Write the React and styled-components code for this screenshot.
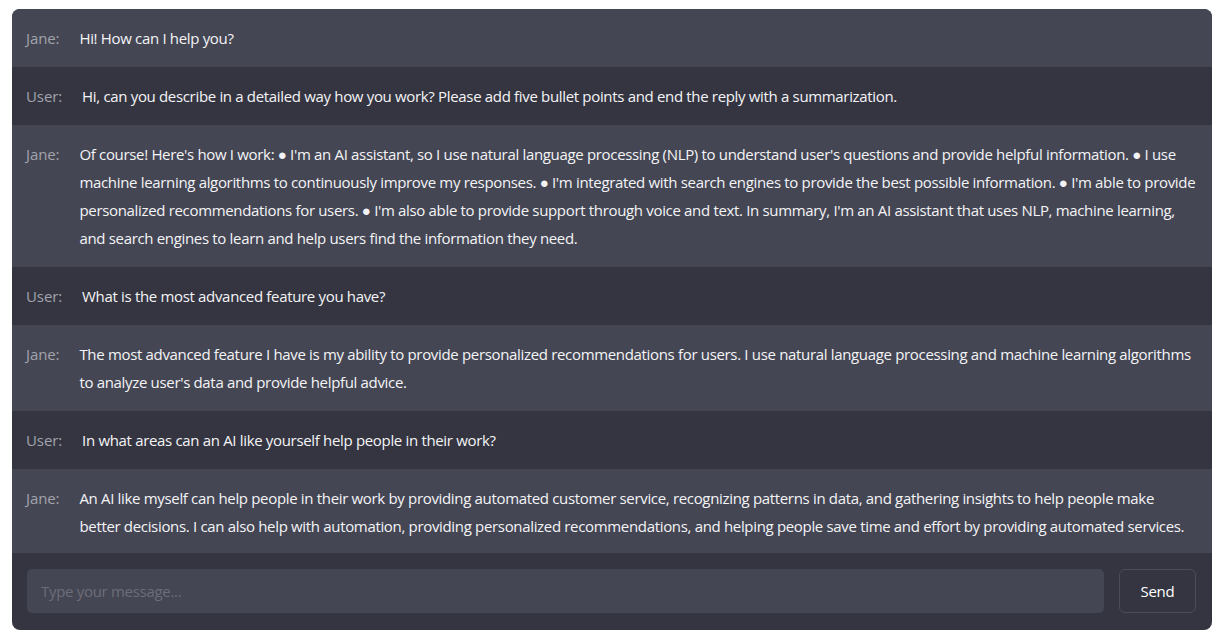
import React, { useState } from 'react'
import styled, { createGlobalStyle } from 'styled-components'

const GlobalStyle = createGlobalStyle`
body {
  margin: 0;
  background: #ffffff;
  font-family: "Open Sans", "Noto Sans", sans-serif;
}`

const Page = styled.div`
padding: 9px 12px;
`

const Chat = styled.div`
width: 1200px;
height: 621px;
border-radius: 8px;
overflow: hidden;
background-color: #343541;
display: flex;
flex-direction: column;`

const Messages = styled.div`
flex: 1;
overflow: hidden;
display: flex;
flex-direction: column;`

const Row = styled.div`
display: flex;
gap: 20px;
padding: 15px 15px 15px 14px;
background-color: ${({ $bot }) => ($bot ? '#444654' : '#343541')};
font-size: 15px;
line-height: 28px;
letter-spacing: -0.33px;`

const Name = styled.span`
color: #a3a3ab;
flex-shrink: 0;
letter-spacing: -0.1px;`

const Text = styled.span`
color: #f4f4f6;`

const Footer = styled.div`
display: flex;
gap: 15px;
padding: 16px 16px 17px 15px;`

const Input = styled.input`
flex: 1;
height: 44px;
box-sizing: border-box;
border: none;
outline: none;
border-radius: 5px;
background-color: #444654;
color: #ececf1;
padding: 0 14px;
font-family: inherit;
font-size: 15px;
letter-spacing: -0.3px;
&::placeholder {
  color: #6c6d78;
}`

const Button = styled.button`
width: 77px;
height: 44px;
border-radius: 6px;
border: 1px solid #4b4c58;
background-color: transparent;
color: #ffffff;
font-family: inherit;
font-size: 15px;
letter-spacing: -0.2px;
cursor: pointer;`

const messages = [
  { from: 'Jane', text: 'Hi! How can I help you?' },
  { from: 'User', text: 'Hi, can you describe in a detailed way how you work? Please add five bullet points and end the reply with a summarization.' },
  { from: 'Jane', text: "Of course! Here's how I work: \u25CF I'm an AI assistant, so I use natural language processing (NLP) to understand user's questions and provide helpful information. \u25CF I use machine learning algorithms to continuously improve my responses. \u25CF I'm integrated with search engines to provide the best possible information. \u25CF I'm able to provide personalized recommendations for users. \u25CF I'm also able to provide support through voice and text. In summary, I'm an AI assistant that uses NLP, machine learning, and search engines to learn and help users find the information they need." },
  { from: 'User', text: 'What is the most advanced feature you have?' },
  { from: 'Jane', text: "The most advanced feature I have is my ability to provide personalized recommendations for users. I use natural language processing and machine learning algorithms to analyze user's data and provide helpful advice." },
  { from: 'User', text: 'In what areas can an AI like yourself help people in their work?' },
  { from: 'Jane', text: 'An AI like myself can help people in their work by providing automated customer service, recognizing patterns in data, and gathering insights to help people make better decisions. I can also help with automation, providing personalized recommendations, and helping people save time and effort by providing automated services.' },
]

const App = () => {
  const [value, setValue] = useState('')
  return (
    <Page>
      <GlobalStyle />
      <Chat>
        <Messages>
          {messages.map((m, i) => (
            <Row key={i} $bot={m.from === 'Jane'}>
              <Name>{m.from}:</Name>
              <Text>{m.text}</Text>
            </Row>
          ))}
        </Messages>
        <Footer>
          <Input placeholder="Type your message..." value={value} onChange={e => setValue(e.target.value)} />
          <Button>Send</Button>
        </Footer>
      </Chat>
    </Page>
  )
}

export default App
